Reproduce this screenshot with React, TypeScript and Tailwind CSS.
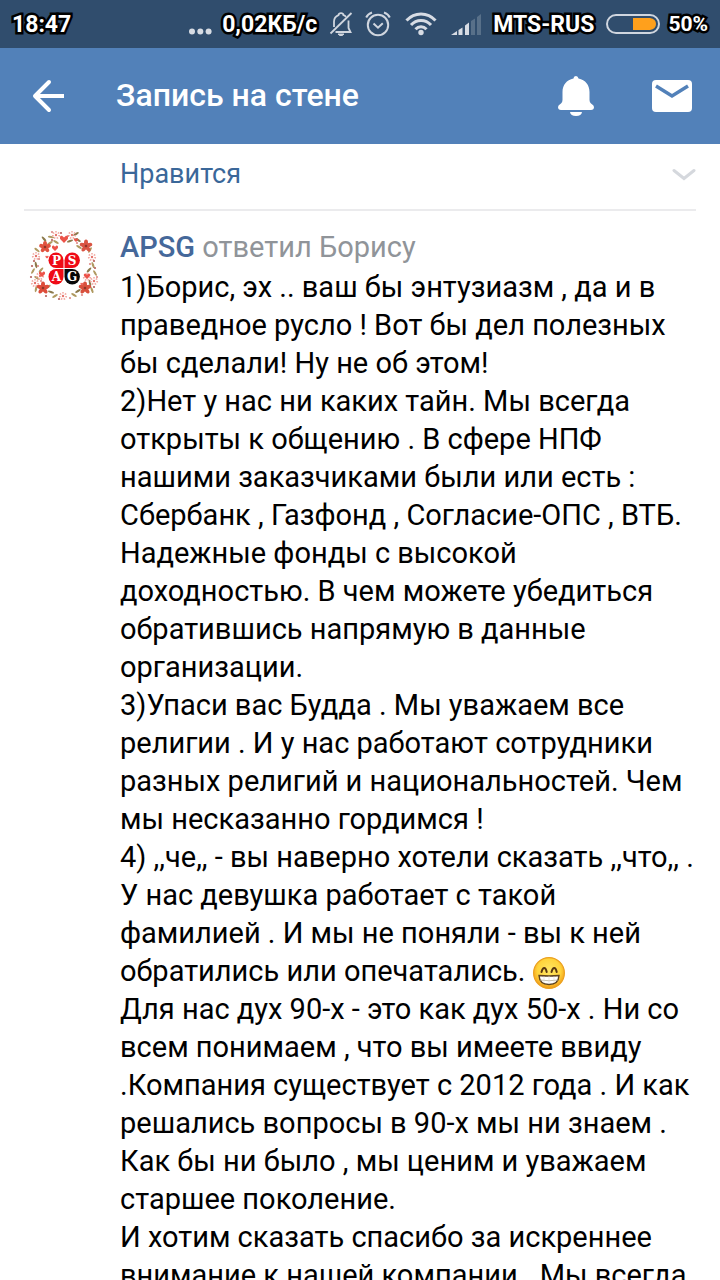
import { ComponentPropsWithoutRef } from "react";
import { clsx } from "clsx";

const StatusText = ({ className, ...props }: ComponentPropsWithoutRef<"span">) => (
  <span
    className={clsx(
      "pt-0.5 font-bold text-white [-webkit-text-stroke:5px_black] [paint-order:stroke_fill] [stroke-linejoin:round]",
      className
    )}
    {...props}
  />
);

const StatusBar = () => (
  <div className="flex h-12 shrink-0 items-center bg-[#304d6d] pr-3 pl-3">
    <StatusText className="text-[23px]">18:47</StatusText>
    <div className="ml-auto flex items-center">
      <svg width="24" height="48" viewBox="0 0 24 48" fill="#d7dce4">
        <circle cx="4" cy="31.5" r="3" />
        <circle cx="12.3" cy="31.5" r="3" />
        <circle cx="20.6" cy="31.5" r="3" />
      </svg>
      <StatusText className="ml-2.5 text-[23px]">0,02КБ/с</StatusText>
      <svg
        className="ml-3"
        width="24"
        height="26"
        viewBox="0 0 24 26"
        fill="none"
        stroke="#d0d6df"
        strokeWidth="1.8"
      >
        <path d="M5 16V10.5A7 7 0 0 1 9.5 4.2Q9.800 2.200 12 2.200T14.500 4.200Q16 4.700 17 5.800M19.500 9.500V17L21.500 21H6.500" />
        <path d="M1.500 22.500 22.500 2" />
        <path d="M9 23h6q-.8 1.600-3 1.600T9 23z" fill="#d0d6df" strokeWidth="1" />
      </svg>
      <svg
        className="ml-3"
        width="26"
        height="26"
        viewBox="0 0 26 26"
        fill="none"
        stroke="#d0d6df"
        strokeWidth="2"
      >
        <circle cx="13" cy="14" r="10.2" />
        <path d="m8.500 12.500 4.500 4.200 4.800-4.400M1.200 6.500Q2.800 3 7 1.500M24.800 6.500Q23.200 3 19 1.500" />
      </svg>
      <svg
        className="ml-3.5"
        width="32"
        height="24"
        viewBox="0 0 32 24"
        fill="none"
        stroke="#d7dce4"
        strokeWidth="3"
      >
        <path d="M1.500 8.500Q7.500 2 16 2t14.500 6.500M6 13q4-4.600 10-4.600T26 13M10.500 17.300q2.300-2.600 5.500-2.600t5.500 2.600" />
        <circle cx="16" cy="20.500" r="2.700" fill="#d7dce4" stroke="none" />
      </svg>
      <svg className="ml-3.5" width="30" height="21" viewBox="0 0 30 21" fill="#d7dce4">
        <path d="M0 21l6-4v4zM7.500 16l4-2.500V21h-4zM14 11.500l4-3V21h-4z" />
        <path d="M20 7l4-2.500V21h-4zM26 3l4-3v21h-4z" fill="#587089" />
      </svg>
      <StatusText className="ml-3 text-[23px]">MTS-RUS</StatusText>
      <svg className="ml-3" width="54" height="20" viewBox="0 0 54 20">
        <rect
          x="1"
          y="1"
          width="52"
          height="18"
          rx="9"
          fill="none"
          stroke="#d0d6df"
          strokeWidth="2"
        />
        <path d="M27 4h17q6 1 6 6t-6 6H27z" fill="#ffa01c" />
      </svg>
      <StatusText className="ml-2 text-[21px]">50%</StatusText>
    </div>
  </div>
);

const Header = () => (
  <header className="flex h-24 shrink-0 items-center bg-[#5281b9] px-7 text-white">
    <button aria-label="Назад" className="flex size-10 items-center justify-center">
      <svg
        width="34"
        height="34"
        viewBox="0 0 34 34"
        fill="none"
        stroke="currentColor"
        strokeWidth="4"
      >
        <path d="M33 17H4" />
        <path d="M18 3 4 17l14 14" strokeLinecap="round" strokeLinejoin="round" />
      </svg>
    </button>
    <h1 className="ml-12 pb-0.5 text-[32px] leading-10 font-medium">Запись на стене</h1>
    <button aria-label="Уведомления" className="ml-auto">
      <svg width="36" height="40" viewBox="0 0 36 40" fill="currentColor">
        <path d="M18 0q2 0 2.500 2.500C27.500 4 31.500 9 31.500 16v8q0 2 1.500 3.500 3 1.500 3 3.500 0 3-3 3H3q-3 0-3-3 0-2 3-3.500Q4.500 26 4.500 24v-8C4.500 9 8.500 4 15.500 2.500 16 0 18 0 18 0z" />
        <path d="M12 36h12q-.5 4-6 4t-6-4z" />
      </svg>
    </button>
    <button aria-label="Сообщения" className="ml-[58px]">
      <svg width="40" height="32" viewBox="0 0 40 32">
        <rect width="40" height="32" rx="4" fill="currentColor" />
        <path d="m4 6 16 10L36 6" fill="none" stroke="#5281b9" strokeWidth="3.5" />
      </svg>
    </button>
  </header>
);

const FLOWERS = [
  { x: 17, y: 17, r: 6, color: "#e0523f" },
  { x: 58, y: 16, r: 6.5, color: "#d95442" },
  { x: 15, y: 58, r: 6.5, color: "#dd4c3a" },
  { x: 57, y: 58, r: 6.5, color: "#d8503c" },
];

const BLOSSOMS = [
  [8, 26], [64, 27], [7, 53], [66, 51], [35, 66], [12, 46], [59, 47],
  [28, 5], [44, 5],
];

const LEAVES = [
  [16, 9, 50], [22, 13, -30], [9, 20, 40], [8, 35, 80], [5, 41, 120],
  [13, 40, -50], [50, 10, 30], [62, 20, 120], [65, 35, 70], [61, 40, -50],
  [67, 43, 60], [9, 48, 30], [23, 62, 20], [27, 66, -30], [46, 65, 30],
  [50, 61, -30], [64, 60, 70], [23, 7, 10], [48, 4, -30], [51, 17, 30],
  [20, 57, -40], [62, 53, 80], [8, 59, 100], [28, 12, 30], [42, 11, -20],
];

const HEARTS = [
  [36, 9, 1.3], [27, 18, 1], [48, 10, 0.7], [14, 44, 1], [59, 46, 1],
  [19, 27, 0.5], [54, 54, 0.5],
];

const BERRIES = [
  [6, 31], [10, 36], [4, 36], [11, 29], [66, 31], [62, 34], [67, 38],
  [24, 2], [33, 3], [49, 13], [3, 47], [69, 47], [31, 69], [42, 68],
  [18, 66], [54, 65], [24, 10], [40, 6], [66, 57], [13, 51],
];

const Avatar = () => (
  <svg width="72" height="72" viewBox="0 0 72 72" role="img" aria-label="APSG">
    {LEAVES.map(([x, y, angle], i) => (
      <ellipse
        key={i}
        rx="3.2"
        ry="1.1"
        fill={i % 3 ? "#b09a61" : "#8c7a4c"}
        transform={`translate(${x} ${y}) rotate(${angle})`}
      />
    ))}
    {BLOSSOMS.map(([x, y], i) => (
      <g key={i} fill="#f7cfc8">
        <circle cx={x} cy={y} r="3.200" fill="none" stroke="#f2aaa3" strokeWidth="1.800" strokeDasharray="1.400 1.400" />
        <circle cx={x} cy={y} r="1.200" fill="#e5746c" />
      </g>
    ))}
    {BERRIES.map(([x, y], i) => (
      <circle key={i} cx={x} cy={y} r="1.100" fill={i % 2 ? "#e08a86" : "#b5605b"} />
    ))}
    {FLOWERS.map(({ x, y, r, color }) => (
      <g key={`${x}-${y}`} transform={`translate(${x} ${y})`} fill={color}>
        {[0, 72, 144, 216, 288].map((angle) => (
          <ellipse key={angle} cy={-r / 2} rx="2" ry={r / 2} transform={`rotate(${angle})`} />
        ))}
        <circle r="1.300" fill="#8d3528" />
      </g>
    ))}
    {HEARTS.map(([x, y, scale], i) => (
      <path
        key={i}
        d="M0 3-3 0Q-3.500-3-1.500-2.500L0-1.200l1.500-1.300Q3.500-3 3 0z"
        fill="#ec5349"
        transform={`translate(${x} ${y}) scale(${scale})`}
      />
    ))}
    <g fill="#ef0b16">
      <path d="M35.500 38h-7.500a7.500 7.700 0 1 1 7.500-7.700z" />
      <path d="M36.500 38v-7.700a7.700 7.700 0 1 1 7.700 7.700z" />
      <path d="M35.500 39v7.700a7.500 7.700 0 1 1-7.500-7.700z" />
      <path d="M36.500 39h7.700a7.700 7.700 0 1 1-7.700 7.700z" fill="#080808" />
    </g>
    <g
      fill="white"
      textAnchor="middle"
      className="font-['DejaVu_Serif',serif] text-[12px] font-bold"
    >
      <text x="28.500" y="34.500">P</text>
      <text x="44" y="34.500">S</text>
      <text x="28.500" y="51">A</text>
      <text x="44" y="51">G</text>
    </g>
  </svg>
);

const GrinEmoji = () => (
  <svg
    className="inline-block align-[-8px]"
    width="32"
    height="32"
    viewBox="0 0 32 32"
    role="img"
    aria-label="😁"
  >
    <defs>
      <radialGradient id="face" cx="50%" cy="42%" r="58%">
        <stop offset="0" stopColor="#ffe766" />
        <stop offset="0.65" stopColor="#ffd43c" />
        <stop offset="1" stopColor="#f19a16" />
      </radialGradient>
    </defs>
    <circle cx="16" cy="16" r="15.400" fill="url(#face)" stroke="#eba01f" strokeWidth="1.200" />
    <path
      d="M8.500 15Q9.500 11 11.200 11t2.500 4M18.500 15Q19.500 11 21.200 11t2.500 4"
      fill="none"
      stroke="#5a3710"
      strokeWidth="2"
      strokeLinecap="round"
    />
    <path d="M6 18.500q10 1 20 0-.5 9-10 9T6 18.500z" fill="#fff" stroke="#5f4320" strokeWidth="1.400" />
    <path d="M7 23q9 1.500 18 0" fill="none" stroke="#b9b09c" strokeWidth=".8" />
    <path d="M11 19v7M16 19v8M21 19v7" fill="none" stroke="#ddd8cc" strokeWidth=".6" />
  </svg>
);

const Comment = () => (
  <article className="flex gap-5 pt-[19px] pl-1">
    <div className="shrink-0">
      <Avatar />
    </div>
    <div className="min-w-0 flex-1">
      <div className="text-[29px] leading-[34px] text-[#909499]">
        <a href="#apsg" className="font-medium text-[#45689a]">APSG</a> ответил Борису
      </div>
      <div className="mt-1 text-[29px] leading-[38px] text-black">
        <p>
          1)Борис, эх .. ваш бы энтузиазм , да и в праведное русло ! Вот бы дел
          полезных бы сделали! Ну не об этом!
        </p>
        <p>
          2)Нет у нас ни каких тайн. Мы всегда открыты к общению . В сфере НПФ
          нашими заказчиками были или есть : Сбербанк , Газфонд , Согласие-ОПС ,
          ВТБ. Надежные фонды с высокой доходностью. В чем можете убедиться
          обратившись напрямую в данные организации.
        </p>
        <p>
          3)Упаси вас Будда . Мы уважаем все религии . И у нас работают
          сотрудники разных религий и национальностей. Чем мы несказанно
          гордимся !
        </p>
        <p>
          4) ,,че,, - вы наверно хотели сказать ,,что,, . У нас девушка работает
          с такой фамилией . И мы не поняли - вы к ней обратились или
          опечатались. <GrinEmoji />
        </p>
        <p>
          Для нас дух 90-х - это как дух 50-х . Ни со всем понимаем , что вы
          имеете ввиду .Компания существует с 2012 года . И как решались вопросы
          в 90-х мы ни знаем . Как бы ни было , мы ценим и уважаем старшее
          поколение.
        </p>
        <p>
          И хотим сказать спасибо за искреннее внимание к нашей компании . Мы
          всегда
        </p>
      </div>
    </div>
  </article>
);

export default function App() {
  return (
    <div className="flex h-screen flex-col overflow-hidden bg-white font-['Roboto',sans-serif]">
      <StatusBar />
      <Header />
      <main className="min-h-0 flex-1 overflow-hidden px-6">
        <div className="flex h-[67px] items-start justify-between border-b-2 border-[#ebebed] pt-3 pl-24">
          <button className="text-[27px] leading-9 text-[#3a6799]">Нравится</button>
          <button aria-label="Ещё" className="pt-3">
            <svg
              width="24"
              height="14"
              viewBox="0 0 24 14"
              fill="none"
              stroke="#d5d8dd"
              strokeWidth="3"
              strokeLinecap="round"
            >
              <path d="m2 2.500 10 8 10-8" />
            </svg>
          </button>
        </div>
        <Comment />
      </main>
    </div>
  );
}
